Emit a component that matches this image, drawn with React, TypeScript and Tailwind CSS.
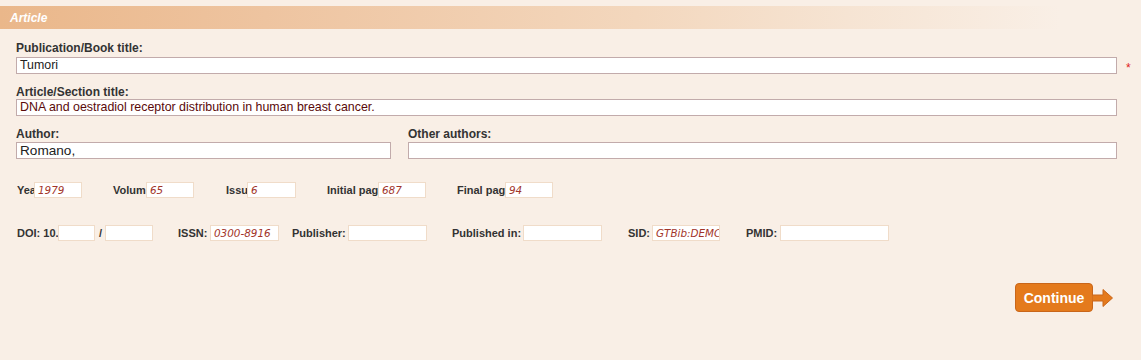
import React from 'react';

const bigInput =
  "block h-[17px] bg-white border border-[#c2abab] px-[3px] leading-[15px] text-[12.4px] font-['Liberation_Sans',Arial,sans-serif] overflow-hidden whitespace-nowrap";
const label =
  "block text-[12px] font-bold text-[#333] leading-[13px] font-['Liberation_Sans',Arial,sans-serif]";
const smallLabel =
  "shrink-0 whitespace-nowrap text-[11px] font-bold text-[#333] leading-[16px]";
const smallInput =
  "shrink-0 h-[16px] bg-white border border-[#f0dcc9] px-[3px] overflow-hidden whitespace-nowrap italic text-[10.4px] leading-[14px] text-[#a2352a] font-['DejaVu_Sans',Verdana,sans-serif]";

function Small({ text, w, value, iw, ml = 0 }: { text: string; w: number; value?: string; iw: number; ml?: number }) {
  return (
    <div className="flex items-center" style={{ marginLeft: ml }}>
      <span className={smallLabel} style={{ width: w }}>{text}</span>
      <span className={smallInput} style={{ width: iw }}>{value}</span>
    </div>
  );
}

export default function App() {
  return (
    <div className="w-[1141px] h-[360px] bg-[#f9efe6] pt-[6px] font-['Liberation_Sans',Arial,sans-serif] overflow-hidden">
      {/* Section header */}
      <div className="h-[23px] w-[1060px] pl-[10px] flex items-center bg-[linear-gradient(to_right,#eab78a_0%,#eec4a0_25%,#f3d7bd_60%,#f6e4d3_80%,#f9efe6_100%)]">
        <span className="text-white italic font-bold text-[12px] leading-none">Article</span>
      </div>

      <div className="pl-[16px]">
        <div className="mt-[13px]">
          <span className={label + " h-[15px]"}>Publication/Book title:</span>
          <div className="flex items-center">
            <span className={bigInput + " w-[1101px] text-[#222]"}>Tumori</span>
            <span className="ml-[9px] text-[#e02020] text-[12px] leading-none mt-[4px]">*</span>
          </div>
        </div>

        <div className="mt-[12px]">
          <span className={label + " h-[13px]"}>Article/Section title:</span>
          <span className={bigInput + " w-[1101px] text-[#5a0a0a]"}>
            DNA and oestradiol receptor distribution in human breast cancer.
          </span>
        </div>

        <div className="mt-[12px] flex gap-[17px]">
          <div>
            <span className={label + " h-[14px]"}>Author:</span>
            <span className={bigInput + " w-[375px] !text-[13.6px] text-[#222]"}>Romano,</span>
          </div>
          <div>
            <span className={label + " h-[14px]"}>Other authors:</span>
            <span className={bigInput + " w-[709px]"}></span>
          </div>
        </div>
      </div>

      {/* Year / Volume / Issue / pages */}
      <div className="mt-[23px] pl-[17px] flex items-center">
        <Small text="Yea" w={17} value="1979" iw={48} />
        <Small text="Volum" w={33} value="65" iw={48} ml={31} />
        <Small text="Issu" w={21} value="6" iw={49} ml={32} />
        <Small text="Initial pag" w={51} value="687" iw={48} ml={31} />
        <Small text="Final pag" w={48} value="94" iw={48} ml={31} />
      </div>

      {/* Identifiers */}
      <div className="mt-[27px] pl-[17px] flex items-center">
        <Small text="DOI: 10." w={41} iw={37} />
        <span className="ml-[4px] w-[6px] text-[11px] font-bold text-[#333] leading-[16px]">/</span>
        <span className={smallInput + " w-[48px]"}></span>
        <Small text="ISSN:" w={32} value="0300-8916" iw={69} ml={25} />
        <Small text="Publisher:" w={56} iw={79} ml={13} />
        <Small text="Published in:" w={71} iw={79} ml={25} />
        <Small text="SID:" w={24} value="GTBib:DEMC" iw={68} ml={26} />
        <Small text="PMID:" w={34} iw={109} ml={26} />
      </div>

      {/* Continue */}
      <div className="mt-[42px] pr-[28px] flex justify-end items-center">
        <button className="w-[78px] h-[29px] rounded-[4px] bg-[#e47a1c] border border-[#c9661a] text-white font-bold text-[14px] leading-none">
          Continue
        </button>
        <svg width="21" height="20" viewBox="0 0 21 20" className="-ml-[1px]">
          <polygon
            points="0,7 11,7 11,1.5 20.5,10 11,18.5 11,13 0,13"
            fill="#e47a1c"
            stroke="#c9661a"
            strokeWidth="1"
            strokeLinejoin="round"
          />
        </svg>
      </div>
    </div>
  );
}
